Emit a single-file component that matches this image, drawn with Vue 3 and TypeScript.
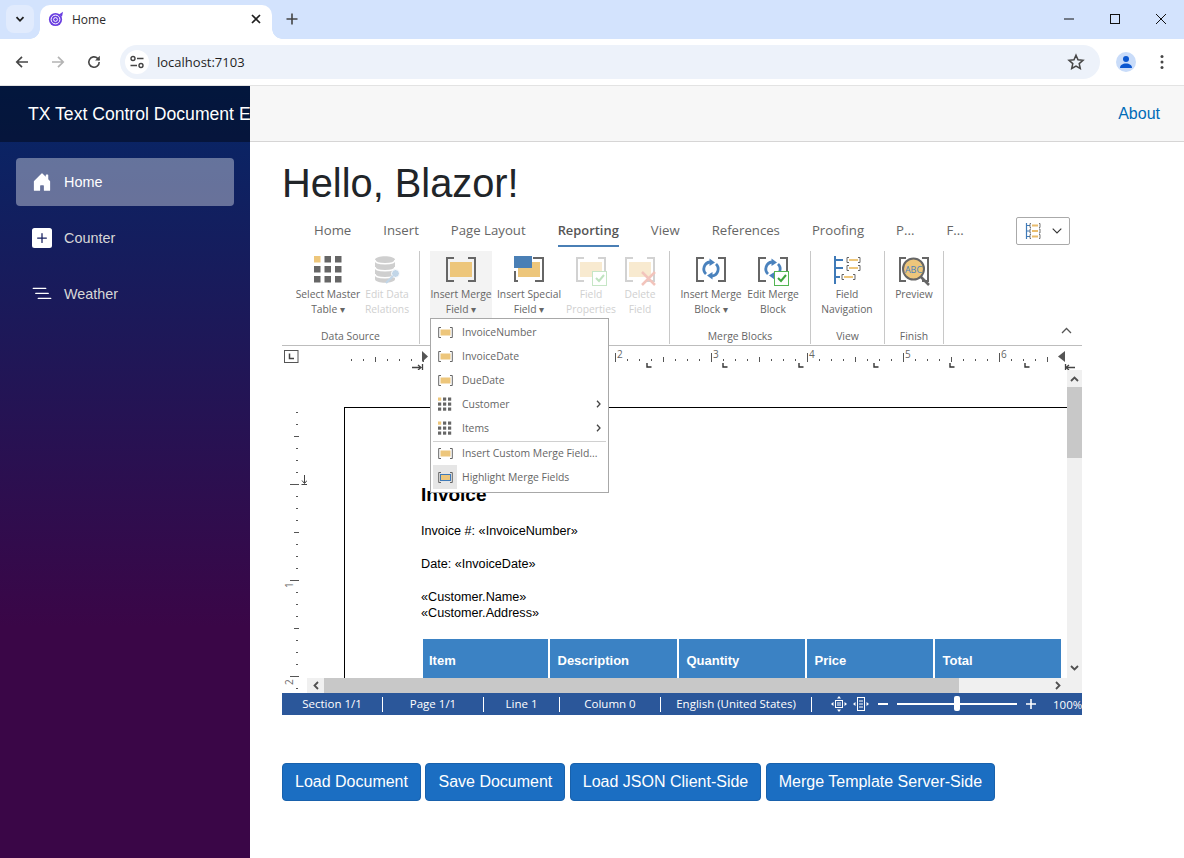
<script setup lang="ts">
const tabs = ['Home', 'Insert', 'Page Layout', 'Reporting', 'View', 'References', 'Proofing', 'P...', 'F...']

interface RibbonButton { id: string; lines: string[]; w: number; off?: boolean; hover?: boolean }
interface RibbonGroup { label: string; pad: number; w: number; buttons: RibbonButton[] }

const groups: RibbonGroup[] = [
  { label: 'Data Source', pad: 13, w: 138, buttons: [
    { id: 'grid', lines: ['Select Master', 'Table ▾'], w: 66 },
    { id: 'db', lines: ['Edit Data', 'Relations'], w: 52, off: true },
  ] },
  { label: '', pad: 10, w: 250, buttons: [
    { id: 'field', lines: ['Insert Merge', 'Field ▾'], w: 62, hover: true },
    { id: 'special', lines: ['Insert Special', 'Field ▾'], w: 74 },
    { id: 'props', lines: ['Field', 'Properties'], w: 50, off: true },
    { id: 'del', lines: ['Delete', 'Field'], w: 48, off: true },
  ] },
  { label: 'Merge Blocks', pad: 10, w: 141, buttons: [
    { id: 'block', lines: ['Insert Merge', 'Block ▾'], w: 62 },
    { id: 'editblock', lines: ['Edit Merge', 'Block'], w: 62 },
  ] },
  { label: 'View', pad: 8, w: 74, buttons: [
    { id: 'nav', lines: ['Field', 'Navigation'], w: 56 },
  ] },
  { label: 'Finish', pad: 8, w: 59, buttons: [
    { id: 'preview', lines: ['Preview'], w: 42 },
  ] },
]

const menu = [
  { label: 'InvoiceNumber', icon: 'field' },
  { label: 'InvoiceDate', icon: 'field' },
  { label: 'DueDate', icon: 'field' },
  { label: 'Customer', icon: 'grid', more: true },
  { label: 'Items', icon: 'grid', more: true },
  { label: 'Insert Custom Merge Field...', icon: 'field', rule: true },
  { label: 'Highlight Merge Fields', icon: 'hl', active: true },
]

const gridCells = [0, 1, 2].flatMap((r) => [0, 1, 2].map((c) => ({ r, c })))

// horizontal ruler, x is relative to the editor's left edge (page x - 282)
const hZero = 141
const hDots: { x: number; tall: boolean; major: boolean }[] = []
for (let i = -6; i <= 52; i++) {
  const x = hZero + i * 12
  if (x < 60 || x > 775) continue
  hDots.push({ x, tall: ((i % 4) + 4) % 4 === 0, major: ((i % 8) + 8) % 8 === 0 })
}
const hStops = [291, 367, 443, 519, 594, 670, 745]
const hNums = [{ n: 2, x: 333 }, { n: 3, x: 429 }, { n: 4, x: 525 }, { n: 5, x: 621 }, { n: 6, x: 717 }]

// vertical ruler, y is relative to the top of the editing area (page y - 370)
const vDots: { y: number; kind: number }[] = []
for (let i = -6; i <= 17; i++) {
  const y = 114 + i * 12
  if (y < 38) continue
  const kind = ((i % 8) + 8) % 8 === 0 ? 2 : ((i % 4) + 4) % 4 === 0 ? 1 : 0
  vDots.push({ y, kind })
}

const cols = ['Item', 'Description', 'Quantity', 'Price', 'Total']
const status = [
  { t: 'Section 1/1', w: 101 },
  { t: 'Page 1/1', w: 101 },
  { t: 'Line 1', w: 76 },
  { t: 'Column 0', w: 101 },
  { t: 'English (United States)', w: 151 },
]
const actions = ['Load Document', 'Save Document', 'Load JSON Client-Side', 'Merge Template Server-Side']
</script>

<template>
  <div class="window">
    <div class="tabstrip">
      <div class="tabsearch">
        <svg width="12" height="12" viewBox="0 0 12 12"><path d="M2.500 4.200 6 7.800l3.500-3.600" fill="none" stroke="#1f1f1f" stroke-width="1.800" /></svg>
      </div>
      <div class="tab">
        <svg class="favicon" width="16" height="16" viewBox="0 0 16 16">
          <circle cx="7.500" cy="8.500" r="6.600" fill="#6a3fe0" />
          <circle cx="7.500" cy="8.500" r="4.400" fill="none" stroke="#fff" stroke-width="1" />
          <circle cx="7.500" cy="8.500" r="1.900" fill="none" stroke="#fff" stroke-width="1" />
          <path d="M11 3.500 15 .8l-1 5z" fill="#6a3fe0" />
        </svg>
        <span class="tabtitle">Home</span>
        <svg class="tabclose" width="10" height="10" viewBox="0 0 10 10"><path d="M1 1l8 8M9 1l-8 8" stroke="#1f1f1f" stroke-width="1.700" /></svg>
      </div>
      <svg class="newtab" width="12" height="12" viewBox="0 0 12 12"><path d="M6 .5v11M.5 6h11" stroke="#444" stroke-width="1.600" /></svg>
      <div class="winctl">
        <svg width="12" height="12" viewBox="0 0 12 12"><path d="M1 6h10" stroke="#111" stroke-width="1" /></svg>
        <svg width="12" height="12" viewBox="0 0 12 12"><rect x="1.500" y="1.500" width="9" height="9" fill="none" stroke="#111" stroke-width="1" /></svg>
        <svg width="12" height="12" viewBox="0 0 12 12"><path d="M1 1l10 10M11 1 1 11" stroke="#111" stroke-width="1" /></svg>
      </div>
    </div>

    <div class="toolbar">
      <svg class="navbtn" width="16" height="16" viewBox="0 0 16 16"><path d="M14 8H3M8 2.800 2.800 8 8 13.200" fill="none" stroke="#474747" stroke-width="1.700" /></svg>
      <svg class="navbtn" width="16" height="16" viewBox="0 0 16 16"><path d="M2 8h11M8 2.800 13.200 8 8 13.200" fill="none" stroke="#b4b4b4" stroke-width="1.700" /></svg>
      <svg class="navbtn" width="16" height="16" viewBox="0 0 16 16"><path d="M13.200 8A5.200 5.200 0 1 1 11.600 4.300L13.300 6" fill="none" stroke="#474747" stroke-width="1.600" /><path d="M13.800 1.800v4.700H9.100z" fill="#474747" /></svg>
      <div class="omnibox">
        <span class="siteinfo">
          <svg width="16" height="14" viewBox="0 0 16 14" fill="none" stroke="#444" stroke-width="1.400">
            <circle cx="4" cy="3.500" r="2" /><path d="M8 3.500h6.500M1.500 10.500H8" /><circle cx="12" cy="10.500" r="2" />
          </svg>
        </span>
        <span class="url">localhost:7103</span>
        <svg class="star" width="18" height="18" viewBox="0 0 18 18"><path d="m9 2.200 2 4.600 5 .5-3.800 3.300 1.100 4.900L9 13l-4.300 2.500 1.100-4.900L2 7.300l5-.5z" fill="none" stroke="#474747" stroke-width="1.500" /></svg>
      </div>
      <span class="profile">
        <svg width="14" height="14" viewBox="0 0 14 14"><circle cx="7" cy="4" r="3" fill="#0b57d0" /><path d="M1 13c0-3 2.600-4.600 6-4.600s6 1.600 6 4.600z" fill="#0b57d0" /></svg>
      </span>
      <svg class="kebab" width="4" height="16" viewBox="0 0 4 16"><circle cx="2" cy="2.500" r="1.500" fill="#474747" /><circle cx="2" cy="8" r="1.500" fill="#474747" /><circle cx="2" cy="13.500" r="1.500" fill="#474747" /></svg>
    </div>

    <div class="app">
      <aside class="sidebar">
        <div class="brand">TX Text Control Document Editor</div>
        <nav class="nav">
          <a class="navlink active">
            <svg width="20" height="20" viewBox="0 0 16 16" fill="#fff"><path d="M6.500 14.500v-3.505c0-.245.25-.495.5-.495h2c.25 0 .5.25.5.5v3.500a.5.500 0 0 0 .5.500h4a.5.500 0 0 0 .5-.5v-7a.5.500 0 0 0-.146-.354L13 5.793V2.500a.5.500 0 0 0-.5-.5h-1a.5.500 0 0 0-.5.500v1.293L8.354 1.146a.5.500 0 0 0-.708 0l-6 6A.5.500 0 0 0 1.500 7.500v7a.5.500 0 0 0 .5.500h4a.5.500 0 0 0 .5-.5z" /></svg>
            <span>Home</span>
          </a>
          <a class="navlink">
            <svg width="20" height="20" viewBox="0 0 16 16" fill="#fff"><path d="M2 0a2 2 0 0 0-2 2v12a2 2 0 0 0 2 2h12a2 2 0 0 0 2-2V2a2 2 0 0 0-2-2H2zm6.500 4.500v3h3a.5.500 0 0 1 0 1h-3v3a.5.500 0 0 1-1 0v-3h-3a.5.500 0 0 1 0-1h3v-3a.5.500 0 0 1 1 0z" /></svg>
            <span>Counter</span>
          </a>
          <a class="navlink">
            <svg width="20" height="20" viewBox="0 0 16 16" fill="#fff"><path d="M4.500 11.500A.5.500 0 0 1 5 11h10a.5.500 0 0 1 0 1H5a.5.500 0 0 1-.5-.5zm-2-4A.5.500 0 0 1 3 7h10a.5.500 0 0 1 0 1H3a.5.500 0 0 1-.5-.5zm-2-4A.5.500 0 0 1 1 3h10a.5.500 0 0 1 0 1H1a.5.500 0 0 1-.5-.5z" /></svg>
            <span>Weather</span>
          </a>
        </nav>
      </aside>

      <main class="main">
        <div class="toprow"><a class="about">About</a></div>
        <article class="content">
          <h1 class="title">Hello, Blazor!</h1>

          <section class="editor">
            <div class="tabsrow">
              <span v-for="t in tabs" :key="t" class="rtab" :class="{ current: t === 'Reporting' }">{{ t }}</span>
              <button class="layoutpick" type="button">
                <svg width="16" height="18" viewBox="0 0 16 18">
                  <path d="M1.500 1v16M1.500 3.500H5M1.500 9H5M1.500 14.500H5" fill="none" stroke="#3f7ab8" stroke-width="1.200" />
                  <path d="M6 1.500H5v4h1M14 1.500h1v4h-1M6 7H5v4h1M14 7h1v4h-1M6 12.500H5v4h1M14 12.500h1v4h-1" fill="none" stroke="#666" stroke-width=".9" />
                  <path d="M7 3.500h6M7 9h6M7 14.500h6" stroke="#e9bc6c" stroke-width="2" />
                </svg>
                <svg width="10" height="6" viewBox="0 0 10 6"><path d="m.7.700 4.300 4.300L9.300.7" fill="none" stroke="#333" stroke-width="1.100" /></svg>
              </button>
            </div>

            <div class="ribbon">
              <div v-for="g in groups" :key="g.label" class="rgroup" :style="{ width: g.w + 'px', paddingLeft: g.pad + 'px' }">
                <div class="rbuttons">
                  <div v-for="b in g.buttons" :key="b.id" class="rbtn" :class="{ off: b.off, hover: b.hover }" :style="{ width: b.w + 'px' }">
                    <svg class="ricon" width="32" height="32" viewBox="0 0 32 32" fill="none">
                      <template v-if="b.id === 'grid'">
                        <rect v-for="c in gridCells" :key="c.r + '-' + c.c" :x="2 + c.c * 10.500" :y="2 + c.r * 10" width="6.500" height="6.500" :fill="c.r + c.c === 0 ? '#edc67b' : '#666'" />
                      </template>
                      <template v-else-if="b.id === 'db'">
                        <path d="M4 6c0-5 20-5 20 0v19c0 5-20 5-20 0z" fill="#cfcfcf" />
                        <path d="M4 6c0 5 20 5 20 0M4 13c0 5 20 5 20 0M4 20c0 5 20 5 20 0" stroke="#fff" stroke-width="1.500" />
                        <circle cx="24.500" cy="19.500" r="4" fill="#c2d6e8" stroke="#fff" />
                        <path d="m22 22-7 7" stroke="#c2d6e8" stroke-width="2.200" />
                      </template>
                      <template v-else-if="b.id === 'field' || b.id === 'props' || b.id === 'del'">
                        <path d="M9 4H2v23h7M23 4h7v23h-7" :stroke="b.off ? '#d2d2d2' : '#666'" stroke-width="2" />
                        <rect x="5" y="8" width="22" height="15" :fill="b.off ? '#f8ead0' : '#edc67b'" />
                        <template v-if="b.id === 'props'">
                          <rect x="17.500" y="17.500" width="14" height="14" fill="#fff" stroke="#c6e6c6" />
                          <path d="m21 24 3 3 5-6" stroke="#bfe3bf" stroke-width="2" />
                        </template>
                        <path v-if="b.id === 'del'" d="m18 18 13 13M31 18 18 31" stroke="#f2c4bc" stroke-width="2.500" />
                      </template>
                      <template v-else-if="b.id === 'special'">
                        <path d="M5 27H2V17M20 4h10v23h-8" stroke="#666" stroke-width="2" />
                        <rect x="5" y="8" width="22" height="15" fill="#edc67b" />
                        <rect x="1" y="2" width="18" height="12" fill="#4a7fb5" />
                      </template>
                      <template v-else-if="b.id === 'block' || b.id === 'editblock'">
                        <path d="M9 4H2v23h7M23 4h7v23h-7" stroke="#666" stroke-width="2" />
                        <path d="M15 8a7 7 0 0 0-4 12" stroke="#4a82bd" stroke-width="2.800" />
                        <path d="M17 22a7 7 0 0 0 4-12" stroke="#4a82bd" stroke-width="2.800" />
                        <path d="M14.500 4.500 20 8.500l-5.500 3.500zM17.500 25.500 12 21.500l5.500-3.500z" fill="#4a82bd" />
                        <template v-if="b.id === 'editblock'">
                          <rect x="17.500" y="17.500" width="14" height="14" fill="#fff" stroke="#53b553" />
                          <path d="m21 24 3 3 5-6" stroke="#3fa63f" stroke-width="2" />
                        </template>
                      </template>
                      <template v-else-if="b.id === 'nav'">
                        <path d="M4 2v28M4 6h8M4 14h8M4 23h5" stroke="#3f7ab8" stroke-width="2" />
                        <path d="M18 3.500h-2v5h2M27 3.500h2v5h-2M18 11.500h-2v5h2M27 11.500h2v5h-2M13 20.500h-2v5h2M22 20.500h2v5h-2" stroke="#666" />
                        <path d="M18 6h9M18 14h9M13 23h9" stroke="#edc67b" stroke-width="2" />
                      </template>
                      <template v-else>
                        <path d="M8 4H2v23h6M24 4h6v23h-6" stroke="#666" stroke-width="2" />
                        <circle cx="15.500" cy="15" r="10.500" fill="#edc67b" stroke="#666" stroke-width="2" />
                        <path d="m23 23 8 8" stroke="#666" stroke-width="2.500" />
                        <text x="15.500" y="18.500" text-anchor="middle" class="abc">ABC</text>
                      </template>
                    </svg>
                    <span v-for="l in b.lines" :key="l" class="rline">{{ l }}</span>
                  </div>
                </div>
                <div class="glabel">{{ g.label }}</div>
              </div>
              <svg class="collapse" width="11" height="7" viewBox="0 0 11 7"><path d="m1 6 4.500-4.500L10 6" fill="none" stroke="#555" stroke-width="1.300" /></svg>
            </div>

            <div class="hruler">
              <svg width="800" height="24" viewBox="0 0 800 24">
                <rect x="2.500" y="4.500" width="13.500" height="12" fill="#fff" stroke="#555" />
                <path d="M7.500 7.500v5h4.500" fill="none" stroke="#444" stroke-width="1.500" />
                <rect v-for="d in hDots" :key="d.x" :x="d.x" :y="d.major ? 7 : d.tall ? 11 : 13" width="1" :height="d.major ? 9 : d.tall ? 5 : 2" fill="#555" />
                <template v-for="x in hStops" :key="x">
                  <path :d="`M${x - 2} 17v4h4.500`" fill="none" stroke="#333" stroke-width="1.400" />
                </template>
                <text v-for="n in hNums" :key="n.n" :x="n.x + 2" y="12" class="rulernum">{{ n.n }}</text>
                <path d="M140 5v11l6-5.500z" fill="#555" />
                <path d="M130 21.500h9M136 19l3 2.500-3 2.500M140.500 18v7" fill="none" stroke="#444" stroke-width="1.300" />
                <path d="M783 5v11l-7-5.500z" fill="#555" />
                <path d="M783.500 18v7M784 21.500h9M787 19l-3 2.500 3 2.500" fill="none" stroke="#444" stroke-width="1.300" />
              </svg>
            </div>

            <div class="workarea">
              <svg class="vruler" width="25" height="323" viewBox="0 0 25 323">
                <rect v-for="d in vDots" :key="d.y" :x="d.kind === 2 ? 8 : d.kind === 1 ? 12 : 14" :y="d.y" :width="d.kind === 2 ? 9 : d.kind === 1 ? 5 : 2" height="1" fill="#555" />
                <path d="M22.500 105v8M20 110.500l2.500 3 2.500-3M19.500 114.500h6" fill="none" stroke="#444" />
                <text x="0" y="0" class="rulernum" transform="translate(11 218) rotate(-90)">1</text>
                <text x="0" y="0" class="rulernum" transform="translate(11 315) rotate(-90)">2</text>
              </svg>

              <div class="docview">
                <div class="sheet">
                  <h2 class="doctitle">Invoice</h2>
                  <p class="docline gap">Invoice #: «InvoiceNumber»</p>
                  <p class="docline gap">Date: «InvoiceDate»</p>
                  <p class="docline">«Customer.Name»</p>
                  <p class="docline">«Customer.Address»</p>
                  <div class="doctable">
                    <div v-for="c in cols" :key="c" class="doccell">{{ c }}</div>
                  </div>
                </div>
              </div>

              <div class="vscroll">
                <span class="sbtn up"><svg width="9" height="6" viewBox="0 0 9 6"><path d="m1 5 3.500-3.500L8 5" fill="none" stroke="#505050" stroke-width="1.800" /></svg></span>
                <span class="vthumb"></span>
                <span class="sbtn down"><svg width="9" height="6" viewBox="0 0 9 6"><path d="m1 1 3.500 3.500L8 1" fill="none" stroke="#505050" stroke-width="1.800" /></svg></span>
              </div>

              <div class="hscroll">
                <span class="sbtn"><svg width="6" height="9" viewBox="0 0 6 9"><path d="M5 1 1.500 4.500 5 8" fill="none" stroke="#505050" stroke-width="1.800" /></svg></span>
                <span class="hthumb"></span>
                <span class="hrest"></span>
                <span class="sbtn"><svg width="6" height="9" viewBox="0 0 6 9"><path d="m1 1 3.500 3.500L1 8" fill="none" stroke="#505050" stroke-width="1.800" /></svg></span>
                <span class="corner"></span>
              </div>
            </div>

            <div class="statusbar">
              <span v-for="s in status" :key="s.t" class="scell" :style="{ width: s.w + 'px' }">{{ s.t }}</span>
              <div class="zoomtools">
                <svg width="16" height="16" viewBox="0 0 16 16" fill="none" stroke="#fff">
                  <rect x="4.500" y="4.500" width="7" height="7" /><path d="M6 7h4M6 9h4" />
                  <path d="M8 0 6 2.500h4zM8 16l-2-2.500h4zM0 8l2.500-2v4zM16 8l-2.500-2v4z" fill="#fff" stroke="none" />
                </svg>
                <svg width="16" height="16" viewBox="0 0 16 16" fill="none" stroke="#fff">
                  <rect x="4.500" y="1.500" width="7" height="13" /><path d="M6 5h4M6 8h4M6 11h4" />
                  <path d="M0 8l2.500-2v4zM16 8l-2.500-2v4z" fill="#fff" stroke="none" />
                </svg>
                <span class="zminus"></span>
                <span class="slider"><span class="knob"></span></span>
                <svg class="zplus" width="10" height="10" viewBox="0 0 10 10"><path d="M5 0v10M0 5h10" stroke="#fff" stroke-width="1.600" /></svg>
                <span class="zpct">100%</span>
              </div>
            </div>

            <div class="dropdown">
              <template v-for="m in menu" :key="m.label">
                <div v-if="m.rule" class="mrule"></div>
                <div class="mitem">
                  <span class="micon" :class="{ on: m.active }">
                    <svg v-if="m.icon === 'grid'" width="14" height="14" viewBox="0 0 14 14">
                      <rect v-for="c in gridCells" :key="c.r + '-' + c.c" :x="c.c * 5" :y="c.r * 5 + .500" width="3.200" height="3.200" :fill="c.r + c.c === 0 ? '#edc67b' : '#666'" />
                    </svg>
                    <svg v-else width="15" height="14" viewBox="0 0 15 14" fill="none">
                      <path d="M3 2.500H.700v10H3M12 2.500h2.300v10H12" stroke="#666" />
                      <rect x="2.500" y="4.500" width="10" height="6" fill="#edc67b" :stroke="m.icon === 'hl' ? '#3f7ab8' : 'none'" />
                    </svg>
                  </span>
                  <span class="mtext">{{ m.label }}</span>
                  <svg v-if="m.more" class="marrow" width="5" height="8" viewBox="0 0 5 8"><path d="m1 .8 3 3.200-3 3.200" fill="none" stroke="#444" stroke-width="1.300" /></svg>
                </div>
              </template>
            </div>
          </section>

          <div class="actions">
            <button v-for="a in actions" :key="a" class="btn" type="button">{{ a }}</button>
          </div>
        </article>
      </main>
    </div>
  </div>
</template>

<style>
html, body { margin: 0; padding: 0; background: #fff; overflow: hidden; }
</style>

<style scoped>
.window { width: 1184px; height: 858px; display: flex; flex-direction: column; overflow: hidden; font-family: "Liberation Sans", Arial, sans-serif; background: #fff; }

.tabstrip { height: 39px; background: #d3e3fd; display: flex; align-items: flex-start; flex: none; position: relative; }
.tabsearch { width: 28px; height: 28px; margin: 5px 0 0 6px; border-radius: 8px; background: #e1ebfd; display: flex; align-items: center; justify-content: center; }
.tab { position: relative; width: 232px; height: 34px; margin: 5px 0 0 6px; background: #fff; border-radius: 10px 10px 0 0; display: flex; align-items: center; padding: 0 10px 6px 8px; box-sizing: border-box; }
.tab::before, .tab::after { content: ""; position: absolute; bottom: 0; width: 10px; height: 10px; background: radial-gradient(circle at var(--cx) 0, transparent 9.500px, #fff 10px); }
.tab::before { left: -10px; --cx: 0; }
.tab::after { right: -10px; --cx: 100%; }
.favicon { flex: none; }
.tabtitle { margin-left: 8px; font: 12px "Open Sans", sans-serif; color: #2b2b2b; flex: 1; }
.tabclose { flex: none; margin-right: 1px; }
.newtab { margin: 13px 0 0 14px; }
.winctl { margin-left: auto; margin-top: 13px; display: flex; gap: 34px; padding-right: 17px; }

.toolbar { height: 47px; flex: none; background: #fff; border-radius: 10px 10px 0 0; display: flex; align-items: center; padding: 0 0 0 14px; box-sizing: border-box; border-bottom: 1px solid #e3e3e3; }
.navbtn { margin-right: 20px; flex: none; }
.navbtn:nth-child(3) { margin-right: 18px; }
.omnibox { width: 980px; height: 34px; border-radius: 17px; background: #edf2fa; display: flex; align-items: center; padding: 0 15px 0 5px; box-sizing: border-box; }
.siteinfo { width: 24px; height: 24px; border-radius: 50%; background: #fff; display: flex; align-items: center; justify-content: center; }
.url { margin-left: 8px; font: 13px "Open Sans", sans-serif; color: #1f1f1f; flex: 1; }
.star { flex: none; }
.profile { width: 20px; height: 20px; border-radius: 50%; background: #c9dcf9; display: flex; align-items: center; justify-content: center; margin-left: 16px; }
.kebab { margin-left: 24px; }

.app { flex: 1; display: flex; min-height: 0; }
.sidebar { width: 250px; flex: none; background-image: linear-gradient(180deg, rgb(5, 39, 103) 0%, #3a0647 70%); display: flex; flex-direction: column; }
.brand { height: 56px; line-height: 56px; padding-left: 28px; background: rgba(0, 0, 0, .4); color: #fff; font-size: 17.600px; white-space: nowrap; overflow: hidden; flex: none; }
.nav { padding: 16px 16px 0; display: flex; flex-direction: column; gap: 8px; }
.navlink { height: 48px; display: flex; align-items: center; gap: 12px; padding-left: 16px; border-radius: 4px; color: #d7d7d7; font-size: 14.400px; }
.navlink.active { background: rgba(255, 255, 255, .37); color: #fff; }

.main { flex: 1; min-width: 0; display: flex; flex-direction: column; }
.toprow { height: 56px; box-sizing: border-box; flex: none; background: #f7f7f7; border-bottom: 1px solid #d6d5d5; display: flex; align-items: center; justify-content: flex-end; padding-right: 24px; }
.about { color: #006bb7; font-size: 16px; }
.content { padding: 17px 0 0 32px; }
.title { margin: 0 0 8px; font-size: 39.800px; line-height: 48px; font-weight: 400; color: #212529; }

.editor { position: relative; width: 800px; height: 500px; font-family: "Open Sans", sans-serif; display: flex; flex-direction: column; background: #fff; }
.tabsrow { height: 35px; flex: none; display: flex; align-items: flex-start; padding-left: 32px; gap: 32px; position: relative; }
.rtab { font-size: 13.200px; color: #666; line-height: 30px; height: 30px; border-bottom: 2px solid transparent; white-space: nowrap; }
.rtab.current { font-weight: 600; color: #555; border-bottom: 2px solid #4a7fb5; font-size: 12.900px; }
.layoutpick { position: absolute; left: 734px; top: 2px; width: 54px; height: 28px; box-sizing: border-box; background: #fff; border: 1px solid #aaa; border-radius: 2px; display: flex; align-items: center; justify-content: center; gap: 11px; padding: 0; }

.ribbon { height: 96px; flex: none; box-sizing: border-box; border-bottom: 1px solid #bdbdbd; display: flex; position: relative; }
.rgroup { box-sizing: border-box; border-right: 1px solid #c8c8c8; display: flex; flex-direction: column; height: 93px; margin-top: 1px; position: relative; }
.rbuttons { display: flex; flex: 1; align-items: flex-start; }
.rbtn { height: 67px; box-sizing: border-box; display: flex; flex-direction: column; align-items: center; padding-top: 3px; flex: none; }
.rbtn.hover { background: #f3f3f3; }
.ricon { flex: none; overflow: visible; margin-bottom: 1px; }
.rline { font-size: 10.300px; line-height: 15px; color: #666; white-space: nowrap; }
.rbtn.off .rline { color: #d0d0d0; }
.glabel { position: absolute; left: 0; right: 0; bottom: 1px; text-align: center; font-size: 10.400px; line-height: 14px; color: #666; }
.collapse { position: absolute; left: 779px; top: 77px; }
.abc { font: 9px "Open Sans", sans-serif; fill: #4a82bd; }

.hruler { height: 24px; flex: none; }
.hruler svg { display: block; }
.rulernum { font: 10px "Open Sans", sans-serif; fill: #666; }

.workarea { display: grid; grid-template-columns: 25px 760px 15px; grid-template-rows: 308px 15px; flex: none; }
.vruler { grid-column: 1; grid-row: 1 / span 2; display: block; }
.docview { grid-column: 2; grid-row: 1; overflow: hidden; background: #fff; }
.sheet { margin: 37px 0 0 37px; border: solid #000; border-width: 1px 0 0 1px; padding: 75px 0 0 76px; height: 400px; box-sizing: border-box; }
.doctitle { margin: 0 0 16px; font: 700 19px/24px "Liberation Sans", Arial, sans-serif; color: #000; }
.docline { margin: 0; font: 12.650px/16.400px "Liberation Sans", Arial, sans-serif; color: #000; height: 16.400px; white-space: nowrap; }
.docline.gap { margin-bottom: 16.400px; }
.doctable { display: grid; grid-template-columns: 125px 127px 126px 126px 126px; gap: 2px; margin: 17.400px 0 0 2px; }
.doccell { height: 42px; background: #3b82c4; color: #fff; font: 700 13px/44px "Liberation Sans", Arial, sans-serif; padding-left: 6px; }
.doccell:nth-child(n + 2) { padding-left: 7.500px; }

.vscroll { grid-column: 3; grid-row: 1; background: #f0f0f0; display: flex; flex-direction: column; }
.sbtn { width: 15px; height: 15px; flex: none; display: flex; align-items: center; justify-content: center; }
.sbtn.up { height: 17px; }
.vthumb { height: 71px; background: #c8c8c8; }
.sbtn.down { margin-top: auto; height: 20px; }

.hscroll { grid-column: 2 / span 2; grid-row: 2; display: flex; background: #f0f0f0; }
.hscroll .sbtn { width: 17px; }
.hthumb { width: 635px; background: #c8c8c8; }
.hrest { flex: 1; }
.corner { width: 16px; }

.statusbar { height: 22px; flex: none; background: #2b579a; display: flex; align-items: center; color: #fff; font-size: 11.500px; overflow: hidden; }
.scell { box-sizing: border-box; text-align: center; border-right: 1px solid #fff; height: 15px; line-height: 14px; flex: none; white-space: nowrap; }
.zoomtools { display: flex; align-items: center; margin-left: 19px; flex: none; }
.zoomtools svg + svg { margin-left: 6px; }
.zminus { width: 10px; height: 2px; background: #fff; margin-left: 9px; }
.slider { position: relative; width: 120px; height: 2px; background: #fff; margin-left: 9px; }
.knob { position: absolute; left: 57px; top: -7px; width: 6px; height: 15px; border-radius: 2px; background: #fff; }
.zoomtools .zplus { margin-left: 9px; }
.zpct { margin-left: 17px; white-space: nowrap; }

.dropdown { position: absolute; left: 148px; top: 103px; width: 179px; height: 175px; box-sizing: border-box; padding-top: 1px; background: #fff; border: 1px solid #a8a8a8; z-index: 5; }
.mitem { height: 24px; display: flex; align-items: center; position: relative; }
.micon { width: 24px; height: 24px; margin-left: 2px; display: flex; align-items: center; justify-content: center; flex: none; }
.micon.on { background: #e6e6e6; }
.mtext { margin-left: 5px; font-size: 10.400px; color: #666; white-space: nowrap; }
.marrow { position: absolute; right: 7px; top: 8px; }
.mrule { height: 1px; background: #d0d0d0; margin: 0 2px; position: relative; top: 1px; }

.actions { display: flex; gap: 4.500px; margin-top: 48px; }
.btn { height: 38px; padding: 0 12px; background: #1b6ec2; border: 1px solid #1861ac; border-radius: 4px; color: #fff; font: 16px "Liberation Sans", Arial, sans-serif; }
</style>
